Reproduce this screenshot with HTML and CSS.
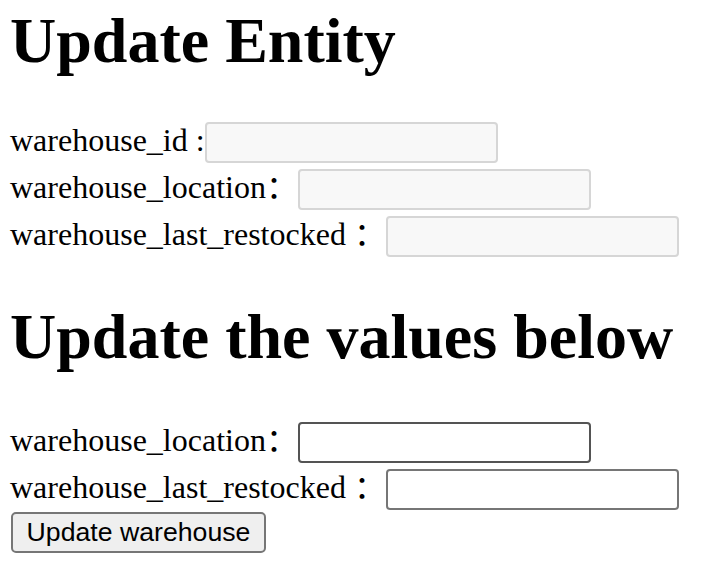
FILE: index.html
```html
<!DOCTYPE html>
<html>
<head>
<meta charset="utf-8">
<link rel="stylesheet" href="styles.css">
</head>
<body>
<h1 class="title first">Update Entity</h1>
<form class="form">
  <div class="row"><span class="label">warehouse_id :</span><input class="field ro" type="text" readonly></div>
  <div class="row"><span class="label">warehouse_location：</span><input class="field ro" type="text" readonly></div>
  <div class="row"><span class="label">warehouse_last_restocked ：</span><input class="field ro" type="text" readonly></div>
</form>
<h1 class="title second">Update the values below</h1>
<form class="form">
  <div class="row"><span class="label">warehouse_location：</span><input class="field edit dark" type="text"></div>
  <div class="row"><span class="label">warehouse_last_restocked ：</span><input class="field edit" type="text"></div>
  <button class="btn" type="button">Update warehouse</button>
</form>
</body>
</html>
```
FILE: styles.css
```css
html, body {
  background: #fff;
}
body {
  margin: 0;
  padding: 0 0 0 10px;
  font-family: "Liberation Serif", "Noto Sans CJK SC", "Times New Roman", serif;
  font-size: 32px;
  color: #000;
}
.title {
  font-size: 64px;
  font-weight: bold;
  line-height: 72px;
}
.title.first {
  margin: 5px 0 42px;
}
.title.second {
  margin: 41px 0 46px;
}
.form {
  margin: 0;
}
.row {
  display: flex;
  align-items: center;
  height: 47px;
}
.label {
  white-space: pre;
  line-height: 36px;
  margin-bottom: 6px;
}
.field {
  box-sizing: border-box;
  width: 293px;
  height: 41px;
  margin: 0;
  padding: 2px 6px;
  border-radius: 4px;
  font-size: 26px;
  font-family: "Liberation Sans", Arial, sans-serif;
  outline: none;
}
.field.ro {
  background: #f8f8f8;
  border: 2px solid #d6d6d6;
}
.field.edit {
  background: #fff;
  border: 2px solid #767676;
}
.field.edit.dark {
  border-color: #545454;
}
.btn {
  display: block;
  box-sizing: border-box;
  width: 255px;
  height: 41px;
  margin: -1px 0 0 1px;
  padding: 0;
  white-space: nowrap;
  background: #efefef;
  border: 2px solid #767676;
  border-radius: 5px;
  font-family: "Liberation Sans", Arial, sans-serif;
  font-size: 26.67px;
  color: #000;
}
```
